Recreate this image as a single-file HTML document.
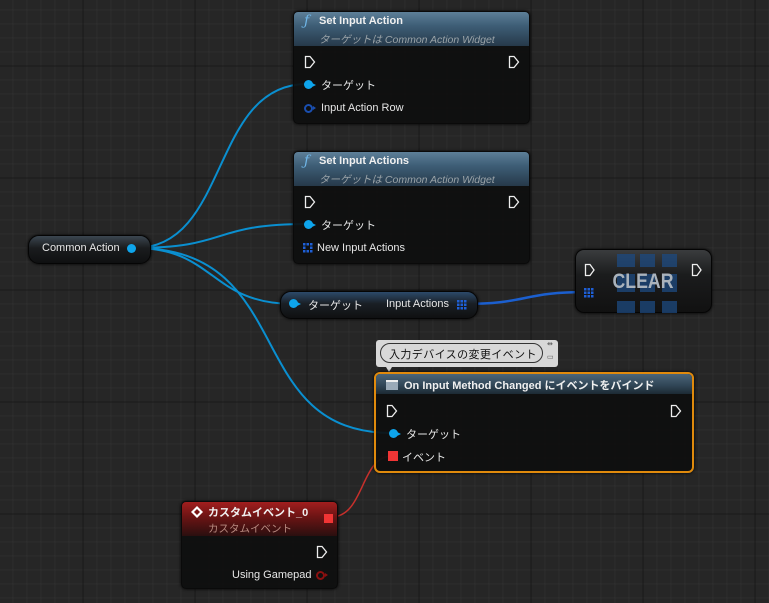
<!DOCTYPE html>
<html><head><meta charset="utf-8"><style>
*{margin:0;padding:0;box-sizing:border-box}
body{width:769px;height:603px;overflow:hidden;background:#262626;font-family:"Liberation Sans","Noto Sans CJK JP",sans-serif;font-size:11px;color:#e6e6e6;position:relative}
.abs{position:absolute}
.node{position:absolute;background:rgba(14,15,15,0.93);border-radius:5px;box-shadow:0 0 3px #000;border:1px solid #0a0a0a}
.hdr{position:absolute;left:0;top:0;right:0;border-radius:4px 4px 0 0;background:linear-gradient(180deg,#5d7f98 0%,#3e5e76 40%,#26394a 100%)}
.t{position:absolute;white-space:nowrap}
.title{font-weight:bold;color:#f0f0f0;font-size:11px}
.sub{font-style:italic;color:#9aa3a8;font-size:10.5px}
.dot{position:absolute;width:9px;height:9px;border-radius:50%;background:#0ea5ec}
.pill{position:absolute;border-radius:11px;background:linear-gradient(180deg,#3b4650 0%,#1a1c1e 45%,#0f1011 100%);border:1px solid #050505;box-shadow:0 0 3px #000}
</style></head><body>
<svg class="abs" style="left:0;top:0" width="769" height="603">
<defs>
<pattern id="mn" x="12.7" y="9.7" width="14" height="14" patternUnits="userSpaceOnUse"><path d="M0 0V14M0 0H14" stroke="#353535" stroke-width="1" fill="none"/></pattern>
<pattern id="mj" x="82.7" y="65.7" width="112" height="112" patternUnits="userSpaceOnUse"><path d="M0 0V112M0 0H112" stroke="#0e0e0e" stroke-width="1.3" fill="none"/></pattern>
</defs>
<rect width="769" height="603" fill="#262626"/>
<rect width="769" height="603" fill="url(#mn)"/>
<rect width="769" height="603" fill="url(#mj)"/>
<g fill="none" stroke="#0a8fd0" stroke-width="2">
<path d="M135 248 C230 248 210 84 307 84"/>
<path d="M135 248 C230 248 210 224 307 224"/>
<path d="M135 248 C215 248 210 304 294 304"/>
<path d="M135 248 C300 248 240 433 392 433"/>
</g>
<path d="M462 304 C530 304 520 292 588 292" fill="none" stroke="#1b5fcf" stroke-width="2.5"/>
<path d="M331 517 C365 517 360 456 392 456" fill="none" stroke="#c7302c" stroke-width="1.5"/>
</svg>

<!-- Set Input Action -->
<div class="node" style="left:293px;top:11px;width:237px;height:113px">
 <div class="hdr" style="height:34px"></div>
 <div class="t" style="left:10px;top:1px;color:#6fb6e8;font-style:italic;font-family:'DejaVu Serif',serif;font-size:14px">ƒ</div>
 <div class="t title" style="left:25px;top:3px">Set Input Action</div>
 <div class="t sub" style="left:25px;top:20px">ターゲットは Common Action Widget</div>
 <svg class="abs" style="left:10px;top:43px" width="12" height="14"><path d="M1.5 1.5H6L10.5 7L6 12.5H1.5Z" fill="none" stroke="#eee" stroke-width="1.3"/></svg>
 <svg class="abs" style="left:214px;top:43px" width="12" height="14"><path d="M1.5 1.5H6L10.5 7L6 12.5H1.5Z" fill="none" stroke="#eee" stroke-width="1.3"/></svg>
 <div class="dot" style="left:10px;top:68px"></div><div class="abs" style="left:18px;top:71px;border-left:4px solid #0ea5ec;border-top:2px solid transparent;border-bottom:2px solid transparent"></div>
 <div class="t" style="left:27px;top:65px">ターゲット</div>
 <div class="abs" style="left:10px;top:92px;width:9px;height:9px;border-radius:50%;border:2px solid #1a4fb0"></div>
 <div class="abs" style="left:19px;top:94px;border-left:3px solid #1a4fb0;border-top:2px solid transparent;border-bottom:2px solid transparent"></div>
 <div class="t" style="left:27px;top:90px">Input Action Row</div>
</div>

<!-- Set Input Actions -->
<div class="node" style="left:293px;top:151px;width:237px;height:113px">
 <div class="hdr" style="height:34px"></div>
 <div class="t" style="left:10px;top:1px;color:#6fb6e8;font-style:italic;font-family:'DejaVu Serif',serif;font-size:14px">ƒ</div>
 <div class="t title" style="left:25px;top:3px">Set Input Actions</div>
 <div class="t sub" style="left:25px;top:20px">ターゲットは Common Action Widget</div>
 <svg class="abs" style="left:10px;top:43px" width="12" height="14"><path d="M1.5 1.5H6L10.5 7L6 12.5H1.5Z" fill="none" stroke="#eee" stroke-width="1.3"/></svg>
 <svg class="abs" style="left:214px;top:43px" width="12" height="14"><path d="M1.5 1.5H6L10.5 7L6 12.5H1.5Z" fill="none" stroke="#eee" stroke-width="1.3"/></svg>
 <div class="dot" style="left:10px;top:68px"></div><div class="abs" style="left:18px;top:71px;border-left:4px solid #0ea5ec;border-top:2px solid transparent;border-bottom:2px solid transparent"></div>
 <div class="t" style="left:27px;top:65px">ターゲット</div>
 <svg class="abs" style="left:9px;top:91px" width="10" height="10"><g fill="#1e5fd6"><rect x="0" y="0" width="2.5" height="2.5"/><rect x="3.5" y="0" width="2.5" height="2.5"/><rect x="7" y="0" width="2.5" height="2.5"/><rect x="0" y="3.5" width="2.5" height="2.5"/><rect x="7" y="3.5" width="2.5" height="2.5"/><rect x="0" y="7" width="2.5" height="2.5"/><rect x="3.5" y="7" width="2.5" height="2.5"/><rect x="7" y="7" width="2.5" height="2.5"/></g></svg>
 <div class="t" style="left:23px;top:90px">New Input Actions</div>
</div>

<!-- Common Action -->
<div class="pill" style="left:28px;top:235px;width:123px;height:29px"></div>
<div class="t" style="left:42px;top:242px">Common Action</div>
<div class="dot" style="left:127px;top:244px"></div>

<!-- Get node -->
<div class="pill" style="left:280px;top:291px;width:198px;height:28px;background:linear-gradient(180deg,#2c4a6a 0%,#1a1f25 45%,#0f1011 100%)"></div>
<div class="dot" style="left:289px;top:299px"></div><div class="abs" style="left:297px;top:302px;border-left:4px solid #0ea5ec;border-top:2px solid transparent;border-bottom:2px solid transparent"></div>
<div class="t" style="left:308px;top:297px">ターゲット</div>
<div class="t" style="left:386px;top:298px">Input Actions</div>
<svg class="abs" style="left:457px;top:300px" width="10" height="10"><g fill="#1e5fd6"><rect x="0" y="0" width="2.5" height="2.5"/><rect x="3.5" y="0" width="2.5" height="2.5"/><rect x="7" y="0" width="2.5" height="2.5"/><rect x="0" y="3.5" width="2.5" height="2.5"/><rect x="3.5" y="3.5" width="2.5" height="2.5"/><rect x="7" y="3.5" width="2.5" height="2.5"/><rect x="0" y="7" width="2.5" height="2.5"/><rect x="3.5" y="7" width="2.5" height="2.5"/><rect x="7" y="7" width="2.5" height="2.5"/></g></svg>

<!-- CLEAR -->
<div class="abs" style="left:575px;top:249px;width:137px;height:64px;border-radius:9px;background:linear-gradient(180deg,#3a3c3e 0%,#1b1c1d 40%,#111 100%);border:1px solid #050505;box-shadow:0 0 3px #000"></div>
<svg class="abs" style="left:575px;top:249px" width="137" height="64"><g fill="#1d4a80" opacity="0.75"><rect x="42" y="5" width="18" height="13"/><rect x="65" y="5" width="15" height="13"/><rect x="87" y="5" width="15" height="13"/><rect x="42" y="25" width="18" height="18"/><rect x="65" y="25" width="15" height="18"/><rect x="87" y="25" width="15" height="18"/><rect x="42" y="52" width="18" height="15"/><rect x="65" y="52" width="15" height="15"/><rect x="87" y="52" width="15" height="15"/></g>
<path d="M10.5 15.5H15L19 21L15 26.5H10.5Z" fill="none" stroke="#eee" stroke-width="1.3"/>
<path d="M117.5 15.5H122L126 21L122 26.5H117.5Z" fill="none" stroke="#eee" stroke-width="1.3"/>
<g fill="#1e5fd6"><rect x="9" y="39" width="2.5" height="2.5"/><rect x="12.5" y="39" width="2.5" height="2.5"/><rect x="16" y="39" width="2.5" height="2.5"/><rect x="9" y="42.5" width="2.5" height="2.5"/><rect x="12.5" y="42.5" width="2.5" height="2.5"/><rect x="16" y="42.5" width="2.5" height="2.5"/><rect x="9" y="46" width="2.5" height="2.5"/><rect x="12.5" y="46" width="2.5" height="2.5"/><rect x="16" y="46" width="2.5" height="2.5"/></g>
<text x="68" y="39" text-anchor="middle" font-family="Liberation Sans" font-weight="bold" font-size="21" fill="#aab3bc" textLength="61" lengthAdjust="spacingAndGlyphs">CLEAR</text></svg>

<!-- Comment bubble -->
<div class="abs" style="left:376px;top:340px;width:182px;height:27px;background:#d8d8d8;border-radius:3px"></div>
<div class="abs" style="left:386px;top:367px;border-top:5px solid #d8d8d8;border-left:3px solid transparent;border-right:3px solid transparent"></div>
<div class="abs" style="left:380px;top:343px;width:163px;height:20px;border:1px solid #333;border-radius:10px"></div>
<div class="t" style="left:389px;top:346px;color:#111;font-size:11px;letter-spacing:0.4px">入力デバイスの変更イベント</div>
<div class="t" style="left:547px;top:340px;color:#555;font-size:7px">⇹</div>
<div class="t" style="left:547px;top:353px;color:#555;font-size:7px">▭</div>

<!-- Bind node -->
<div class="node" style="left:374px;top:372px;width:320px;height:101px;border:2px solid #e08a0c;border-radius:6px">
 <div class="hdr" style="height:20px;background:linear-gradient(180deg,#4b6579 0%,#2f4454 60%,#1c2a34 100%)"></div>
 <div class="abs" style="left:10px;top:6px;width:12px;height:10px;background:#9aaab8;border-top:2px solid #eee"></div>
 <div class="t title" style="left:28px;top:3px">On Input Method Changed にイベントをバインド</div>
 <svg class="abs" style="left:10px;top:30px" width="12" height="14"><path d="M1.5 1.5H6L10.5 7L6 12.5H1.5Z" fill="none" stroke="#eee" stroke-width="1.3"/></svg>
 <svg class="abs" style="left:294px;top:30px" width="12" height="14"><path d="M1.5 1.5H6L10.5 7L6 12.5H1.5Z" fill="none" stroke="#eee" stroke-width="1.3"/></svg>
 <div class="dot" style="left:13px;top:55px"></div><div class="abs" style="left:21px;top:58px;border-left:4px solid #0ea5ec;border-top:2px solid transparent;border-bottom:2px solid transparent"></div>
 <div class="t" style="left:30px;top:52px">ターゲット</div>
 <div class="abs" style="left:12px;top:77px;width:10px;height:10px;background:#f03535"></div>
 <div class="t" style="left:26px;top:75px">イベント</div>
</div>

<!-- Custom event -->
<div class="node" style="left:181px;top:501px;width:157px;height:88px">
 <div class="hdr" style="height:34px;background:linear-gradient(180deg,#a21e1e 0%,#6a1414 45%,#2a0f0f 100%)"></div>
 <svg class="abs" style="left:8px;top:3px" width="14" height="14"><path d="M7 1L13 7L7 13L1 7Z" fill="#fff"/><path d="M7 4L10 7L7 10L4 7Z" fill="#7a1515"/></svg>
 <div class="t title" style="left:26px;top:2px">カスタムイベント_0</div>
 <div class="t" style="left:26px;top:19px;color:#b88a80;font-size:10.5px">カスタムイベント</div>
 <div class="abs" style="left:142px;top:12px;width:9px;height:9px;background:#f03535"></div>
 <svg class="abs" style="left:134px;top:43px" width="12" height="14"><path d="M1.5 1.5H6L10.5 7L6 12.5H1.5Z" fill="none" stroke="#eee" stroke-width="1.3"/></svg>
 <div class="t" style="left:50px;top:67px">Using Gamepad</div>
 <div class="abs" style="left:134px;top:69px;width:9px;height:9px;border-radius:50%;border:2px solid #8a1010"></div>
 <div class="abs" style="left:143px;top:71px;border-left:3px solid #8a1010;border-top:2px solid transparent;border-bottom:2px solid transparent"></div>
</div>
</body></html>
